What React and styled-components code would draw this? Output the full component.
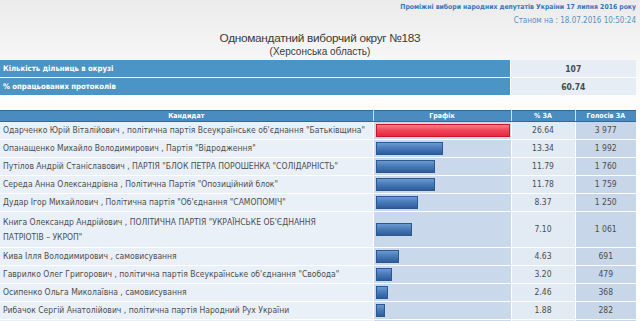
import React from 'react';
import styled, { createGlobalStyle } from 'styled-components';

const GlobalStyle = createGlobalStyle`
  body {
    margin: 0;
    background: linear-gradient(#ebebeb 0, #f6f6f6 56px, #fdfdfd 100px, #fff 140px);
    font-family: "Liberation Sans", Arial, sans-serif;
    color: #4a4a4a;
  }
`;

const candidates = [
  { name: ['Одарченко Юрій Віталійович , політична партія Всеукраїнське об\'єднання "Батьківщина"'], pct: '26.64', votes: '3 977', lead: true },
  { name: ['Опанащенко Михайло Володимирович , Партія "Відродження"'], pct: '13.34', votes: '1 992' },
  { name: ['Путілов Андрій Станіславович , ПАРТІЯ "БЛОК ПЕТРА ПОРОШЕНКА "СОЛІДАРНІСТЬ"'], pct: '11.79', votes: '1 760' },
  { name: ['Середа Анна Олександрівна , Політична Партія "Опозиційний блок"'], pct: '11.78', votes: '1 759' },
  { name: ['Дудар Ігор Михайлович , Політична партія "Об\'єднання "САМОПОМІЧ"'], pct: '8.37', votes: '1 250' },
  { name: ['Книга Олександр Андрійович , ПОЛІТИЧНА ПАРТІЯ "УКРАЇНСЬКЕ ОБ\'ЄДНАННЯ', 'ПАТРІОТІВ – УКРОП"'], pct: '7.10', votes: '1 061' },
  { name: ['Кива Ілля Володимирович , самовисування'], pct: '4.63', votes: '691' },
  { name: ['Гаврилко Олег Григорович , політична партія Всеукраїнське об\'єднання "Свобода"'], pct: '3.20', votes: '479' },
  { name: ['Осипенко Ольга Миколаївна , самовисування'], pct: '2.46', votes: '368' },
  { name: ['Рибачок Сергій Анатолійович , політична партія Народний Рух України'], pct: '1.88', votes: '282' },
  { name: ['Ярош Віктор Петрович , самовисування'], pct: '1.52', votes: '227' },
];

const App = () => {
  return (
    <Page>
      <GlobalStyle />
      <TopInfo>
        <ElectionName>Проміжні вибори народних депутатів України 17 липня 2016 року</ElectionName>
        <Stamp>Станом на : 18.07.2016 10:50:24</Stamp>
      </TopInfo>
      <Title>Одномандатний виборчий округ №183</Title>
      <Region>(Херсонська область)</Region>

      <Table>
        <colgroup>
          <col style={{ width: 510 }} />
          <col style={{ width: 126 }} />
        </colgroup>
        <tbody>
          <tr>
            <LabelCell>Кількість дільниць в окрузі</LabelCell>
            <ValueCell>107</ValueCell>
          </tr>
          <tr>
            <LabelCell>% опрацьованих протоколів</LabelCell>
            <ValueCell>60.74</ValueCell>
          </tr>
        </tbody>
      </Table>

      <ResultsTable>
        <colgroup>
          <col style={{ width: 373 }} />
          <col style={{ width: 138 }} />
          <col style={{ width: 64 }} />
          <col style={{ width: 61 }} />
        </colgroup>
        <thead>
          <tr>
            <HeadCell>Кандидат</HeadCell>
            <HeadCell>Графік</HeadCell>
            <HeadCell>% ЗА</HeadCell>
            <HeadCell>Голосів ЗА</HeadCell>
          </tr>
        </thead>
        <tbody>
          {candidates.map((c) => (
            <tr key={c.name[0]}>
              <NameCell $tall={c.name.length > 1}>
                {c.name.map((line, i) => (
                  <React.Fragment key={line}>
                    {i > 0 && <br />}
                    {line}
                  </React.Fragment>
                ))}
              </NameCell>
              <GraphCell>
                <Bar $lead={c.lead} style={{ width: Math.round(parseFloat(c.pct) * 5.03) }} />
              </GraphCell>
              <PctCell>{c.pct}</PctCell>
              <VotesCell>{c.votes}</VotesCell>
            </tr>
          ))}
        </tbody>
      </ResultsTable>
    </Page>
  );
};

export default App;

const Page = styled.div`
  width: 636px;
  height: 321px;
  overflow: hidden;
`;

const TopInfo = styled.div`
  text-align: right;
  padding-top: 2px;
  font-family: "DejaVu Sans Condensed", "DejaVu Sans", sans-serif;
  font-stretch: condensed;
`;

const ElectionName = styled.div`
  font-size: 6.8px;
  font-weight: bold;
  color: #3576b8;
  line-height: 11px;
`;

const Stamp = styled.div`
  font-size: 8px;
  color: #5b8fc1;
  line-height: 11px;
  margin-top: 2px;
`;

const Title = styled.div`
  text-align: center;
  font-size: 11.8px;
  letter-spacing: -0.3px;
  color: #3a3a3a;
  line-height: 16px;
  margin-top: 4px;
  padding-left: 4px;
`;

const Region = styled.div`
  text-align: center;
  font-size: 10px;
  color: #3a3a3a;
  line-height: 12px;
  padding-left: 4px;
`;

const Table = styled.table`
  width: 636px;
  border-collapse: collapse;
  table-layout: fixed;
  margin-top: 2px;
  font-family: "DejaVu Sans Condensed", "DejaVu Sans", sans-serif;
  font-stretch: condensed;
`;

const LabelCell = styled.td`
  background: #4a95c6;
  color: #fff;
  font-weight: bold;
  font-size: 7.7px;
  height: 17px;
  padding: 0 3px;
  border-bottom: 1px solid #fff;
  border-right: 1px solid #fff;
`;

const ValueCell = styled.td`
  background: #e6edf5;
  color: #4a4a4a;
  font-weight: bold;
  font-size: 8.5px;
  text-align: center;
  height: 17px;
  padding: 0;
  border-bottom: 1px solid #fff;
`;

const ResultsTable = styled.table`
  width: 636px;
  border-collapse: collapse;
  table-layout: fixed;
  margin-top: 14px;
  font-family: "DejaVu Sans Condensed", "DejaVu Sans", sans-serif;
  font-stretch: condensed;
`;

const HeadCell = styled.th`
  background: #4a8cc0;
  border-top: 1px solid #2e6b9c;
  border-bottom: 1px solid #2e6b9c;
  border-right: 1px solid #cfe0ee;
  color: #fff;
  font-size: 7px;
  font-weight: bold;
  height: 10px;
  padding: 0;
  line-height: 10px;

  &:last-child {
    border-right: none;
  }
`;

const cell = `
  font-size: 8.5px;
  line-height: 15px;
  height: 15px;
  padding: 1px 3px;
  border-bottom: 1px solid #fff;
  border-right: 1px solid #fff;
  color: #4d4d4d;
  white-space: nowrap;
`;

const NameCell = styled.td`
  ${cell}
  background: #eaf0f7;
  padding: ${(p) => (p.$tall ? '2.5px 3px' : '1px 3px')};
  overflow: hidden;
`;

const GraphCell = styled.td`
  ${cell}
  background: #c9d8ea;
  padding: 0 2px;
`;

const PctCell = styled.td`
  ${cell}
  background: #e2eaf3;
  text-align: center;
`;

const VotesCell = styled.td`
  ${cell}
  background: #c7d6e9;
  text-align: center;
  border-right: none;
`;

const Bar = styled.div`
  height: 13px;
  box-sizing: border-box;
  border: 1px solid ${(p) => (p.$lead ? '#c9162e' : '#2b5890')};
  background: ${(p) =>
    p.$lead
      ? 'linear-gradient(#f7808c, #f0485a 45%, #e42a40 100%)'
      : 'linear-gradient(#6c9ad2, #4a7bb9 45%, #2f5d99 100%)'};
`;
